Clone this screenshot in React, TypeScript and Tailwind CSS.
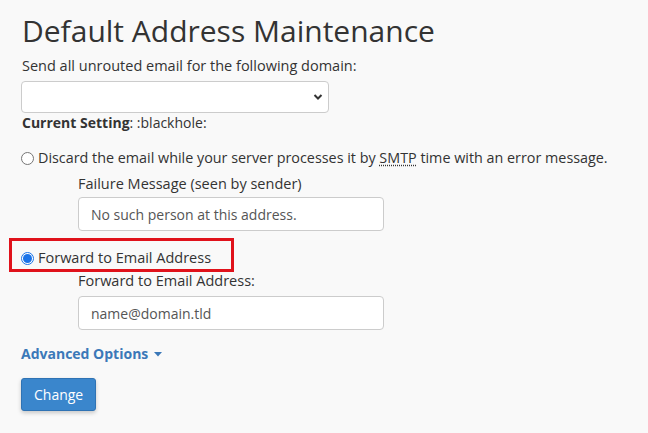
import React from 'react';

const font = { fontFamily: '"Open Sans", "Liberation Sans", sans-serif' };

export default function App() {
  return (
    <div className="min-h-[433px] w-[648px] bg-[#f9f9f9] pl-[21px] pt-[14px] text-[14px] leading-[20px] text-[#333]" style={font}>
      <h1 className="ml-px text-[30px] leading-[33px] font-normal text-[#333]">Default Address Maintenance</h1>

      <label className="mt-[9px] block ml-px text-[14.5px]">Send all unrouted email for the following domain:</label>
      <div className="relative mt-[5px] w-[308px]">
        <select className="block h-[32px] w-full appearance-none rounded-[4px] border border-[#ccc] bg-white px-3" />
        <svg className="pointer-events-none absolute right-[6px] top-[12px]" width="10" height="8" viewBox="0 0 10 8">
          <path d="M1.5 2 L5 5.5 L8.5 2" fill="none" stroke="#333" strokeWidth="2" />
        </svg>
      </div>
      <div className="ml-px">
        <span className="font-bold">Current Setting</span>: :blackhole:
      </div>

      <div className="mt-[15px] flex items-center text-[14.35px]">
        <span className="mr-[4px] h-[13px] w-[13px] rounded-full border border-[#767676] bg-white" />
        <span>
          Discard the email while your server processes it by{' '}
          <abbr className="underline decoration-dotted underline-offset-2" title="Simple Mail Transfer Protocol">SMTP</abbr>{' '}
          time with an error message.
        </span>
      </div>
      <div className="ml-[57px]">
        <div className="mt-[6px] text-[14.5px]">Failure Message (seen by sender)</div>
        <input
          className="mt-[3px] block h-[34px] w-[306px] rounded-[4px] border border-[#ccc] bg-white px-3 text-[14px] placeholder-[#555]"
          style={font}
          placeholder="No such person at this address."
        />
      </div>

      <div className="-ml-[12px] mt-[7px] inline-flex items-center border-[3px] border-[#e0121b] pb-[1px] pl-[9px] pr-[20px] pt-[7px] text-[14.5px]">
        <span className="mr-[4px] flex h-[13px] w-[13px] items-center justify-center rounded-full border border-[#1a73e8] bg-white">
          <span className="h-[9px] w-[9px] rounded-full bg-[#1a73e8]" />
        </span>
        <span>Forward to Email Address</span>
      </div>
      <div className="ml-[57px]">
        <div className="-mt-px text-[14.5px]">Forward to Email Address:</div>
        <input
          className="mt-[5px] block h-[34px] w-[306px] rounded-[4px] border border-[#ccc] bg-white px-3 text-[14px] placeholder-[#555]"
          style={font}
          placeholder="name@domain.tld"
        />
      </div>

      <div className="mt-[14px] flex items-center font-bold text-[#3b78b8]">
        Advanced Options
        <svg className="ml-[6px]" width="8" height="5" viewBox="0 0 8 5">
          <path d="M0 0 H8 L4 4.5 Z" fill="#3b78b8" />
        </svg>
      </div>
      <button className="mt-[14px] h-[33px] rounded-[3px] border border-[#2f73b4] bg-[#3a86cc] px-[12px] text-[14px] text-white shadow-[0_2px_4px_rgba(0,0,0,0.2)]" style={font}>
        Change
      </button>
    </div>
  );
}
